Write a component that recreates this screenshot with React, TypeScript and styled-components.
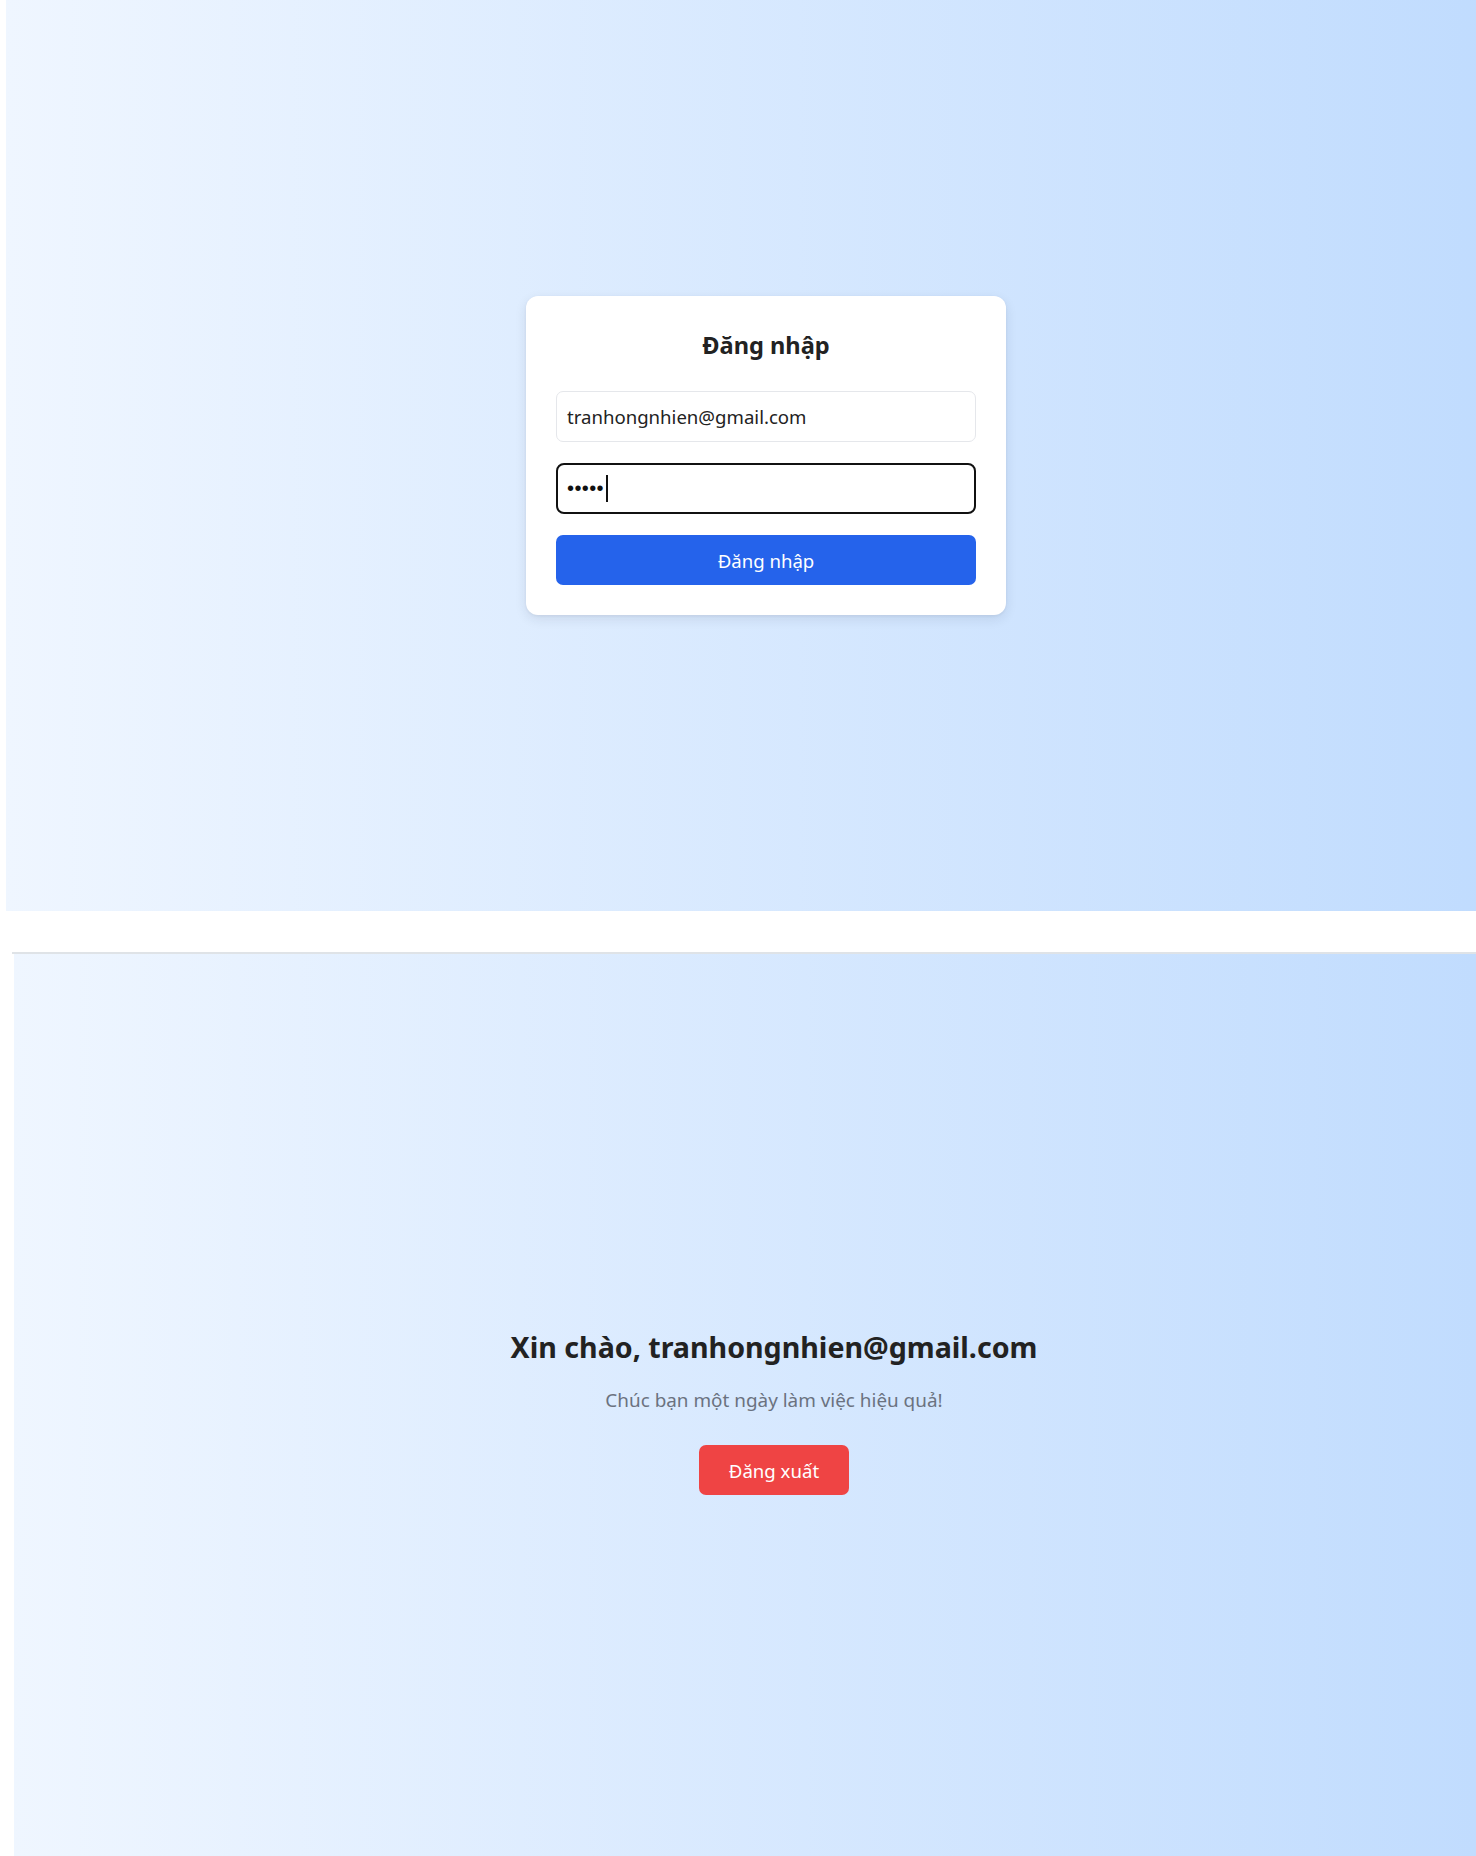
import React from "react";
import styled, { createGlobalStyle } from "styled-components";

const GlobalStyle = createGlobalStyle`
  html, body {
    margin: 0;
    padding: 0;
    background: #ffffff;
  }
  body {
    font-family: "Noto Sans", "Open Sans", sans-serif;
    color: #222222;
  }
  * { box-sizing: border-box; }
`;

const Page = styled.div`
  width: 1476px;
  height: 1856px;
  overflow: hidden;
  background: #ffffff;
`;

const Screen = styled.section<{ $left: number; $height: number }>`
  margin-left: ${(p) => p.$left}px;
  width: 1520px;
  height: ${(p) => p.$height}px;
  background: linear-gradient(to right, #eff6ff, #bfdbfe);
  display: flex;
  align-items: center;
  justify-content: center;
`;

const Divider = styled.div`
  margin-top: 41px;
  margin-left: 12px;
  height: 2px;
  background: #dfe3e7;
`;

const LoginCard = styled.form`
  width: 480px;
  padding: 30px;
  background: #ffffff;
  border-radius: 12px;
  box-shadow: 0 4px 12px rgba(30, 41, 59, 0.1), 0 1px 3px rgba(30, 41, 59, 0.06);
  display: flex;
  flex-direction: column;
`;

const CardTitle = styled.h2`
  margin: 0 0 27px;
  font-size: 23.6px;
  line-height: 38px;
  font-weight: 700;
  text-align: center;
  color: #222222;
`;

const Fields = styled.div`
  display: flex;
  flex-direction: column;
  gap: 21px;
`;

const TextInput = styled.input`
  height: 51px;
  width: 100%;
  border: 1px solid #e5e7eb;
  border-radius: 7px;
  padding: 0 10px;
  font-family: inherit;
  font-size: 18.6px;
  color: #222222;
  background: #ffffff;
  outline: none;
`;

const PasswordBox = styled.div`
  height: 51px;
  border: 2px solid #111111;
  border-radius: 8px;
  padding: 0 9px;
  display: flex;
  align-items: center;
  background: #ffffff;
`;

const Dots = styled.span`
  font-family: "Liberation Sans", Arial, sans-serif;
  font-size: 20px;
  letter-spacing: 0.4px;
  color: #111111;
`;

const Caret = styled.span`
  width: 1.5px;
  height: 27px;
  margin-left: 2px;
  background: #111111;
`;

const ActionButton = styled.button<{ $tone: "primary" | "danger"; $wide?: boolean }>`
  height: 50px;
  border: none;
  border-radius: 7px;
  font-family: inherit;
  font-size: 18.6px;
  color: #ffffff;
  cursor: pointer;
  background: ${(p) => (p.$tone === "primary" ? "#2563eb" : "#ef4444")};
  width: ${(p) => (p.$wide ? "100%" : "auto")};
  padding: ${(p) => (p.$wide ? "0" : "0 30px")};
`;

const Welcome = styled.div`
  display: flex;
  flex-direction: column;
  align-items: center;
  text-align: center;
`;

const Greeting = styled.h1`
  margin: 0;
  font-size: 28.6px;
  line-height: 36px;
  font-weight: 700;
  color: #222222;
  white-space: nowrap;
`;

const Subtitle = styled.p`
  margin: 21px 0 0;
  font-size: 18.9px;
  line-height: 28px;
  color: #6b7280;
`;

const LogoutWrap = styled.div`
  margin-top: 31px;
`;

export default function App() {
  const email = "tranhongnhien@gmail.com";
  return (
    <Page>
      <GlobalStyle />
      <Screen $left={6} $height={911}>
        <LoginCard onSubmit={(e) => e.preventDefault()}>
          <CardTitle>Đăng nhập</CardTitle>
          <Fields>
            <TextInput type="email" defaultValue={email} aria-label="Email" />
            <PasswordBox role="textbox" aria-label="Mật khẩu">
              <Dots>•••••</Dots>
              <Caret />
            </PasswordBox>
            <ActionButton type="submit" $tone="primary" $wide>
              Đăng nhập
            </ActionButton>
          </Fields>
        </LoginCard>
      </Screen>
      <Divider />
      <Screen $left={14} $height={916}>
        <Welcome>
          <Greeting>Xin chào, {email}</Greeting>
          <Subtitle>Chúc bạn một ngày làm việc hiệu quả!</Subtitle>
          <LogoutWrap>
            <ActionButton type="button" $tone="danger">
              Đăng xuất
            </ActionButton>
          </LogoutWrap>
        </Welcome>
      </Screen>
    </Page>
  );
}
